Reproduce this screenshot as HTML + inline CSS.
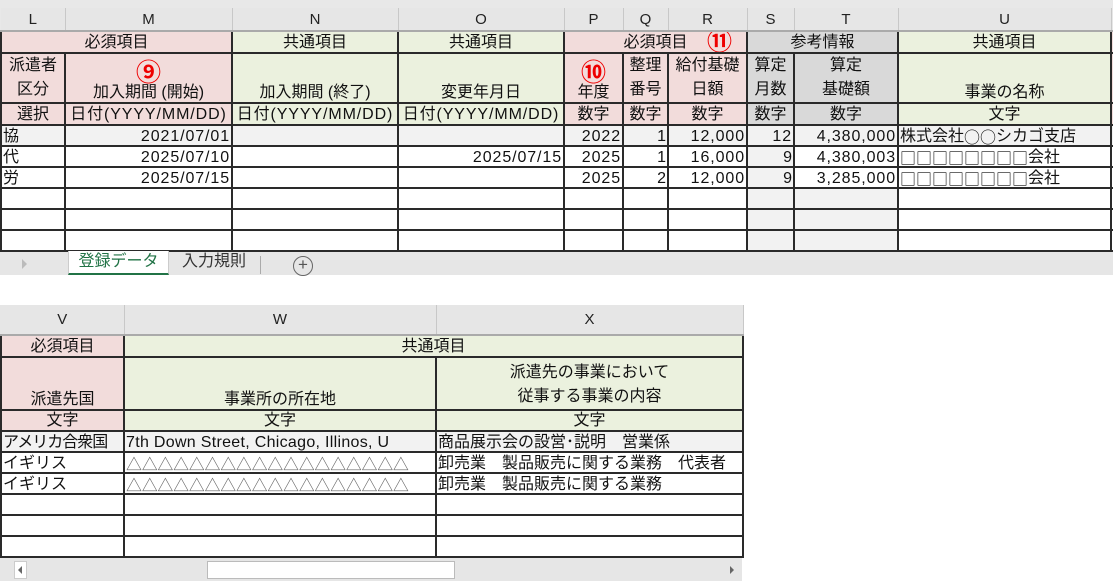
<!DOCTYPE html>
<html><head><meta charset="utf-8"><style>
*{box-sizing:border-box;margin:0;padding:0}
body{width:1113px;height:581px;overflow:hidden;background:#fff;position:relative;font-family:"Liberation Sans","Noto Sans CJK JP",sans-serif;font-size:16px;color:#111}
table{border-collapse:collapse;table-layout:fixed;position:absolute}
td{background:#fff;border:2px solid #2a2a2a;overflow:hidden;white-space:nowrap;text-align:center;padding:0 1px;line-height:19px;vertical-align:bottom}
tr.s td{line-height:17px;height:21px;max-height:21px}
tr.h td{background:#e6e6e6;border:none;border-right:1px solid #c8c8c8;border-bottom:2px solid #aaa;color:#222;font-size:15px;vertical-align:middle}
.p{background:#f2dcdb}.g{background:#ebf1de}.y{background:#d9d9d9}.l{background:#f2f2f2}
.r{text-align:right}.lf{text-align:left}
.d{letter-spacing:0.9px}
.j{font-family:"Noto Sans CJK JP",sans-serif;display:inline-block;height:17px;line-height:17px;vertical-align:top;overflow:hidden}
.c{color:#e00;font-weight:bold;font-size:25px;line-height:24px;display:block;font-family:"Noto Sans CJK JP",sans-serif}
</style></head><body>
<div style="position:absolute;left:0;top:0;width:1113px;height:275px;background:#e8e8e8"></div>
<table style="left:0;top:8px;width:1116px">
<colgroup><col style="width:64px"><col style="width:167px"><col style="width:166px"><col style="width:166px"><col style="width:59px"><col style="width:45px"><col style="width:79px"><col style="width:47px"><col style="width:104px"><col style="width:213px"><col style="width:6px"></colgroup>
<tr class="h" style="height:23px"><td>L</td><td>M</td><td>N</td><td>O</td><td>P</td><td>Q</td><td>R</td><td>S</td><td>T</td><td>U</td><td></td></tr>
<tr style="height:22px"><td class="p" colspan="2">必須項目</td><td class="g">共通項目</td><td class="g">共通項目</td><td class="p" colspan="3" style="position:relative">必須項目<span style="position:absolute;left:142px;top:-5px;color:#e00;font-weight:bold;font-size:25px;line-height:26px;font-family:'Noto Sans CJK JP',sans-serif">⑪</span></td><td class="y" colspan="2">参考情報</td><td class="g">共通項目</td><td class="p"></td></tr>
<tr style="height:50px"><td class="p" style="line-height:24px">派遣者<br>区分</td><td class="p"><span class="c">⑨</span>加入期間 (開始)</td><td class="g">加入期間 (終了)</td><td class="g">変更年月日</td><td class="p"><span class="c">⑩</span>年度</td><td class="p" style="line-height:24px">整理<br>番号</td><td class="p" style="line-height:24px">給付基礎<br>日額</td><td class="y" style="line-height:24px">算定<br>月数</td><td class="y" style="line-height:24px">算定<br>基礎額</td><td class="g">事業の名称</td><td class="p"></td></tr>
<tr style="height:22px"><td class="p">選択</td><td class="p d" style="padding:0">日付(YYYY/MM/DD)</td><td class="g d" style="padding:0">日付(YYYY/MM/DD)</td><td class="g d" style="padding:0">日付(YYYY/MM/DD)</td><td class="p">数字</td><td class="p">数字</td><td class="p">数字</td><td class="y">数字</td><td class="y">数字</td><td class="g">文字</td><td class="p"></td></tr>
<tr class="s"><td class="lf l">協</td><td class="r l d">2021/07/01</td><td class="l"></td><td class="l"></td><td class="r l d">2022</td><td class="r l">1</td><td class="r l d">12,000</td><td class="r l d">12</td><td class="r l d">4,380,000</td><td class="lf l">株式会社<span class="j">○○</span>シカゴ支店</td><td class="l"></td></tr>
<tr class="s"><td class="lf">代</td><td class="r d">2025/07/10</td><td></td><td class="r d">2025/07/15</td><td class="r d">2025</td><td class="r">1</td><td class="r d">16,000</td><td class="r l">9</td><td class="r d">4,380,003</td><td class="lf"><span class="j">□□□□□□□□</span>会社</td><td></td></tr>
<tr class="s"><td class="lf">労</td><td class="r d">2025/07/15</td><td></td><td></td><td class="r d">2025</td><td class="r">2</td><td class="r d">12,000</td><td class="r l">9</td><td class="r d">3,285,000</td><td class="lf"><span class="j">□□□□□□□□</span>会社</td><td></td></tr>
<tr class="s"><td></td><td></td><td></td><td></td><td></td><td></td><td></td><td class="l"></td><td class="l"></td><td></td><td></td></tr>
<tr class="s"><td></td><td></td><td></td><td></td><td></td><td></td><td></td><td class="l"></td><td class="l"></td><td></td><td></td></tr>
<tr class="s"><td></td><td></td><td></td><td></td><td></td><td></td><td></td><td class="l"></td><td class="l"></td><td></td><td></td></tr>
</table>
<div style="position:absolute;left:0;top:252px;width:1113px;height:23px;background:#e6e6e6"></div>
<div style="position:absolute;left:22px;top:259px;width:0;height:0;border-left:5px solid #bbb;border-top:5px solid transparent;border-bottom:5px solid transparent"></div>
<div style="position:absolute;left:68px;top:251px;width:101px;height:24px;background:#fff;border-bottom:2px solid #217346;border-left:1px solid #ccc;border-right:1px solid #ccc;color:#217346;font-size:16px;text-align:center;line-height:22px">登録データ</div>
<div style="position:absolute;left:172px;top:251px;width:84px;height:22px;color:#333;font-size:16px;text-align:center;line-height:22px">入力規則</div>
<div style="position:absolute;left:260px;top:256px;width:1px;height:18px;background:#aaa"></div>
<div style="position:absolute;left:293px;top:256px;width:20px;height:20px;border:1.5px solid #666;border-radius:50%;text-align:center;line-height:16px;color:#555;font-size:17px">+</div>

<div style="position:absolute;left:0;top:305px;width:740px;height:30px;background:#e6e6e6"></div>
<table style="left:0;top:305px;width:742px">
<colgroup><col style="width:123px"><col style="width:312px"><col style="width:307px"></colgroup>
<tr class="h" style="height:30px"><td>V</td><td>W</td><td>X</td></tr>
<tr style="height:22px"><td class="p">必須項目</td><td class="g" colspan="2">共通項目</td></tr>
<tr style="height:53px"><td class="p">派遣先国</td><td class="g">事業所の所在地</td><td class="g" style="line-height:24px">派遣先の事業において<br>従事する事業の内容</td></tr>
<tr style="height:21px"><td class="p">文字</td><td class="g">文字</td><td class="g">文字</td></tr>
<tr class="s"><td class="lf l" style="letter-spacing:-1px">アメリカ合衆国</td><td class="lf l" style="letter-spacing:0.3px">7th Down Street, Chicago, Illinos, U</td><td class="lf l">商品展示会の設営･説明　営業係</td></tr>
<tr class="s"><td class="lf">イギリス</td><td class="lf"><span class="j" style="color:#666;letter-spacing:-0.3px">△△△△△△△△△△△△△△△△△△</span></td><td class="lf">卸売業　製品販売に関する業務　代表者</td></tr>
<tr class="s"><td class="lf">イギリス</td><td class="lf"><span class="j" style="color:#666;letter-spacing:-0.3px">△△△△△△△△△△△△△△△△△△</span></td><td class="lf">卸売業　製品販売に関する業務</td></tr>
<tr class="s"><td></td><td></td><td></td></tr>
<tr class="s"><td></td><td></td><td></td></tr>
<tr class="s"><td></td><td></td><td></td></tr>
</table>
<div style="position:absolute;left:0;top:558px;width:742px;height:23px;background:#e6e6e6"></div>
<div style="position:absolute;left:14px;top:561px;width:13px;height:18px;background:#fff;border:1px solid #ccc"></div>
<div style="position:absolute;left:18px;top:566px;border-right:4px solid #666;border-top:4px solid transparent;border-bottom:4px solid transparent"></div>
<div style="position:absolute;left:207px;top:561px;width:248px;height:18px;background:#fff;border:1px solid #bbb"></div>
<div style="position:absolute;left:730px;top:566px;border-left:4px solid #666;border-top:4px solid transparent;border-bottom:4px solid transparent"></div>
</body></html>
